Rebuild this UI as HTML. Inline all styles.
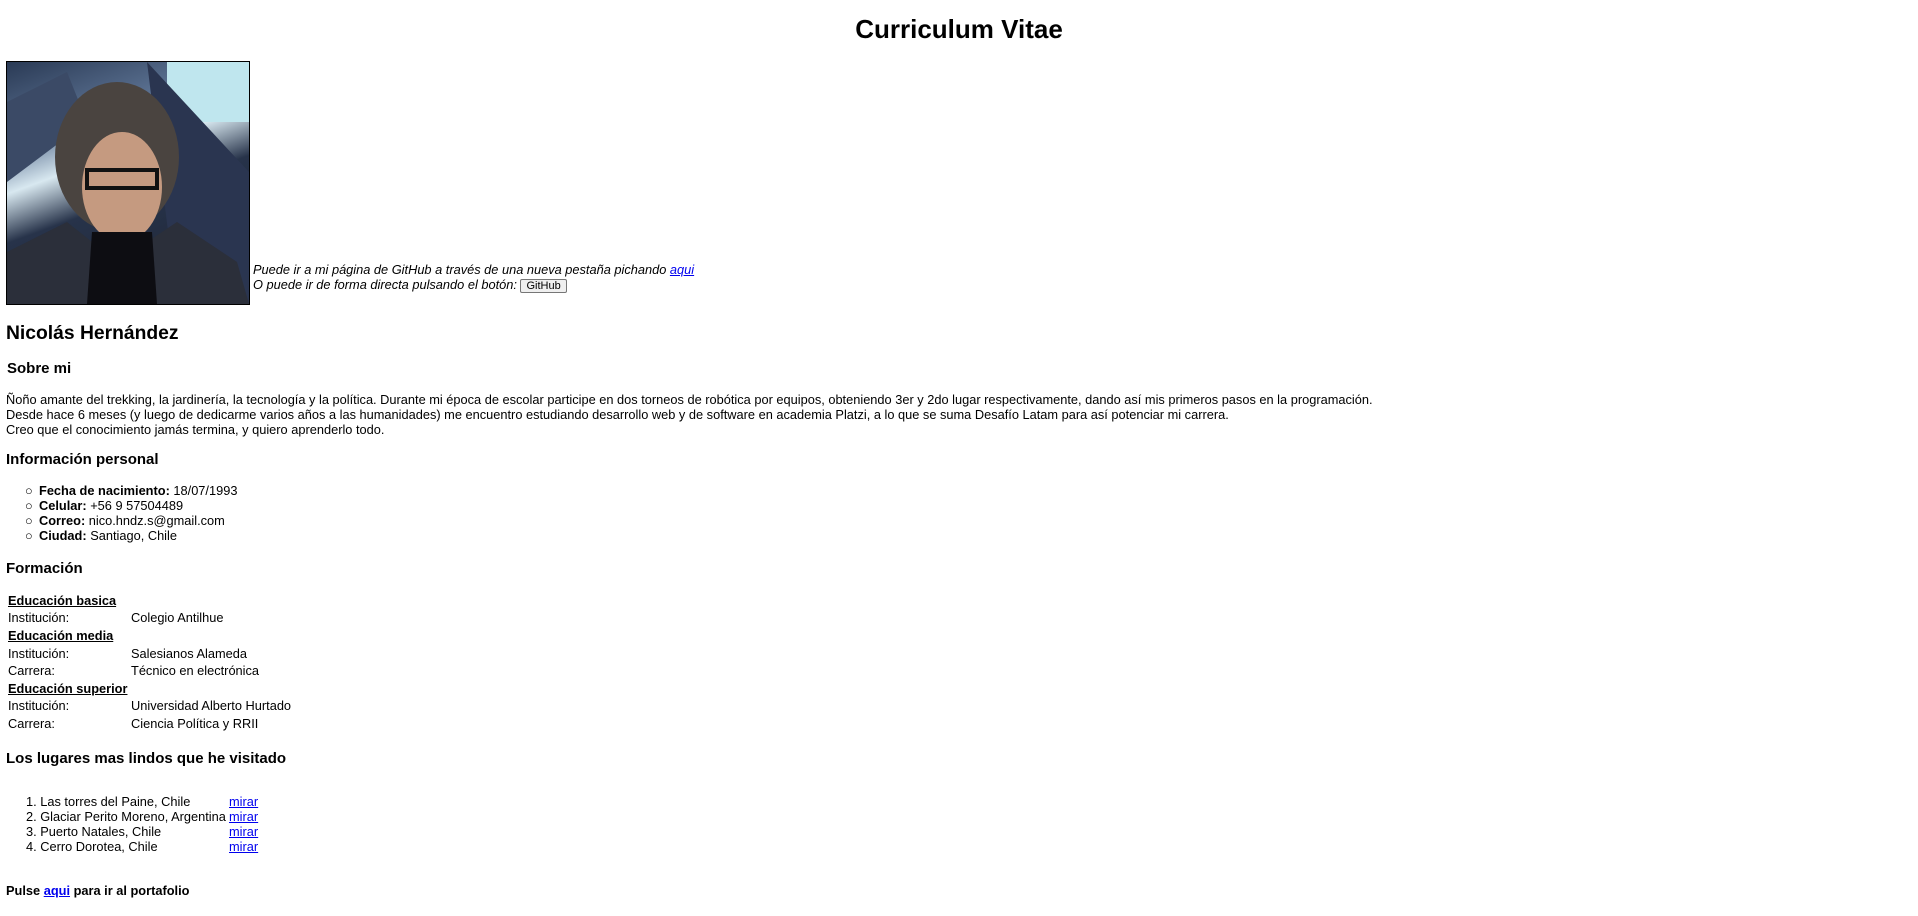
<!DOCTYPE html>
<html><head><meta charset="utf-8"><style>
body{margin:0;width:1918px;height:916px;background:#fff;font-family:"Liberation Sans",Arial,sans-serif;font-size:12.8px;color:#000;position:relative;overflow:hidden}
.a{position:absolute;white-space:nowrap;line-height:15px}
a{color:#00e;text-decoration:underline}
b{font-weight:bold}
.h{font-weight:bold}
.u{text-decoration:underline;font-weight:bold}
</style></head><body>
<div class="a h" style="left:0;width:1918px;text-align:center;top:14px;font-size:26px;line-height:30px">Curriculum Vitae</div>
<div style="position:absolute;left:6px;top:61px;width:242px;height:242px;border:1px solid #000;overflow:hidden;background:linear-gradient(160deg,#2a3a55 0%,#5a7090 25%,#d8e8f0 40%,#27334a 55%,#1c2230 100%)">
<svg width="242" height="242" viewBox="0 0 242 242">
<rect x="160" y="0" width="82" height="60" fill="#bfe6ee"/>
<path d="M140 0 L242 110 L242 242 L170 242 Z" fill="#2a3550"/>
<path d="M0 40 L60 10 L80 60 L0 120Z" fill="#3b4a66"/>
<ellipse cx="110" cy="95" rx="62" ry="75" fill="#4a4440"/>
<ellipse cx="115" cy="125" rx="40" ry="55" fill="#c59a80"/>
<rect x="80" y="108" width="70" height="18" fill="none" stroke="#111" stroke-width="4"/>
<path d="M0 242 L0 190 L60 160 L110 200 L170 160 L230 200 L242 242Z" fill="#2b2f3a"/>
<path d="M85 170 L145 170 L150 242 L80 242Z" fill="#0d0d12"/>
</svg></div>
<div class="a" style="left:253px;top:262px;font-style:italic">Puede ir a mi página de GitHub a través de una nueva pestaña pichando <a>aqui</a></div>
<div class="a" style="left:253px;top:277px;font-style:italic">O puede ir de forma directa pulsando el botón: <span style="display:inline-block;font-style:normal;font-size:11px;line-height:12px;border:1px solid #767676;background:#efefef;border-radius:2px;padding:0 5px;vertical-align:middle">GitHub</span></div>
<div class="a h" style="left:6px;top:322px;font-size:19.3px;line-height:24px">Nicolás Hernández</div>
<div class="a h" style="left:7px;top:360px;font-size:15px;line-height:18px">Sobre mi</div>
<div class="a" style="left:6px;top:392px">Ñoño amante del trekking, la jardinería, la tecnología y la política. Durante mi época de escolar participe en dos torneos de robótica por equipos, obteniendo 3er y 2do lugar respectivamente, dando así mis primeros pasos en la programación.</div>
<div class="a" style="left:6px;top:407px">Desde hace 6 meses (y luego de dedicarme varios años a las humanidades) me encuentro estudiando desarrollo web y de software en academia Platzi, a lo que se suma Desafío Latam para así potenciar mi carrera.</div>
<div class="a" style="left:6px;top:422px">Creo que el conocimiento jamás termina, y quiero aprenderlo todo.</div>
<div class="a h" style="left:6px;top:451px;font-size:15px;line-height:18px">Información personal</div>
<div class="a" style="left:25px;top:483px">○</div><div class="a" style="left:39px;top:483px"><b>Fecha de nacimiento:</b> 18/07/1993</div>
<div class="a" style="left:25px;top:498px">○</div><div class="a" style="left:39px;top:498px"><b>Celular:</b> +56 9 57504489</div>
<div class="a" style="left:25px;top:513px">○</div><div class="a" style="left:39px;top:513px"><b>Correo:</b> nico.hndz.s@gmail.com</div>
<div class="a" style="left:25px;top:528px">○</div><div class="a" style="left:39px;top:528px"><b>Ciudad:</b> Santiago, Chile</div>
<div class="a h" style="left:6px;top:560px;font-size:15px;line-height:18px">Formación</div>
<div class="a u" style="left:8px;top:593px">Educación basica</div>
<div class="a" style="left:8px;top:610px">Institución:</div><div class="a" style="left:131px;top:610px">Colegio Antilhue</div>
<div class="a u" style="left:8px;top:628px">Educación media</div>
<div class="a" style="left:8px;top:646px">Institución:</div><div class="a" style="left:131px;top:646px">Salesianos Alameda</div>
<div class="a" style="left:8px;top:663px">Carrera:</div><div class="a" style="left:131px;top:663px">Técnico en electrónica</div>
<div class="a u" style="left:8px;top:681px">Educación superior</div>
<div class="a" style="left:8px;top:698px">Institución:</div><div class="a" style="left:131px;top:698px">Universidad Alberto Hurtado</div>
<div class="a" style="left:8px;top:716px">Carrera:</div><div class="a" style="left:131px;top:716px">Ciencia Política y RRII</div>
<div class="a h" style="left:6px;top:750px;font-size:15px;line-height:18px">Los lugares mas lindos que he visitado</div>
<div class="a" style="left:26px;top:794px">1. Las torres del Paine, Chile</div><div class="a" style="left:229px;top:794px"><a>mirar</a></div>
<div class="a" style="left:26px;top:809px">2. Glaciar Perito Moreno, Argentina</div><div class="a" style="left:229px;top:809px"><a>mirar</a></div>
<div class="a" style="left:26px;top:824px">3. Puerto Natales, Chile</div><div class="a" style="left:229px;top:824px"><a>mirar</a></div>
<div class="a" style="left:26px;top:839px">4. Cerro Dorotea, Chile</div><div class="a" style="left:229px;top:839px"><a>mirar</a></div>
<div class="a h" style="left:6px;top:883px">Pulse <a>aqui</a> para ir al portafolio</div>
</body></html>
